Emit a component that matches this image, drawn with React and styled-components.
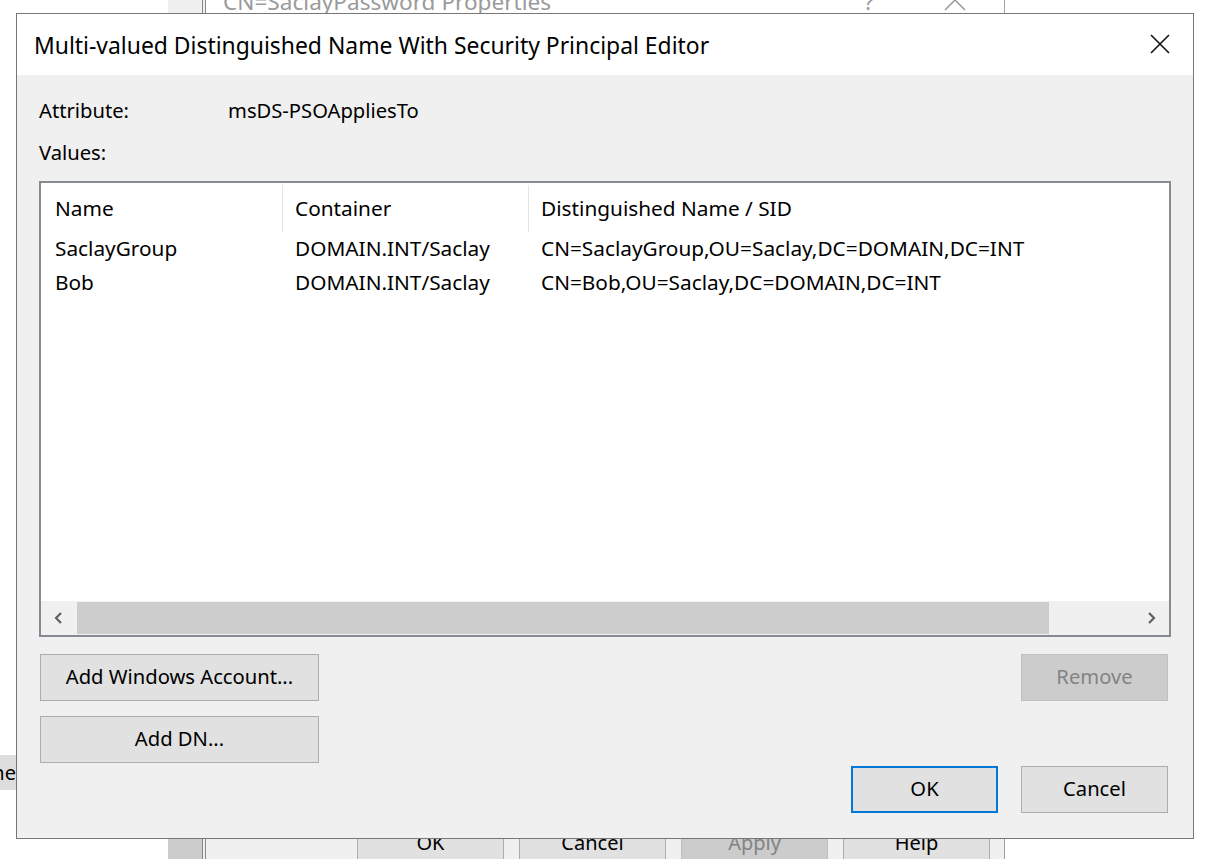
import React from "react";
import styled, { createGlobalStyle } from "styled-components";

const GlobalStyle = createGlobalStyle`
  html, body {
    margin: 0;
    padding: 0;
    background: #ffffff;
    overflow: hidden;
  }
  body {
    font-family: "Noto Sans", "Liberation Sans", sans-serif;
    color: #000;
  }
`;

const rows = [
  {
    name: "SaclayGroup",
    container: "DOMAIN.INT/Saclay",
    dn: "CN=SaclayGroup,OU=Saclay,DC=DOMAIN,DC=INT",
  },
  {
    name: "Bob",
    container: "DOMAIN.INT/Saclay",
    dn: "CN=Bob,OU=Saclay,DC=DOMAIN,DC=INT",
  },
];

export default function App() {
  return (
    <>
      <GlobalStyle />
      <Desktop>
        <SideStrip>
          <StripTop />
          <StripBottom />
        </SideStrip>

        <BackWindow>
          <BackTitleBar>
            <BackTitle>CN=SaclayPassword Properties</BackTitle>
            <BackHelp>?</BackHelp>
            <BackClose>
              <svg width="22" height="22" viewBox="0 0 22 22">
                <path d="M1 1 L21 21 M21 1 L1 21" stroke="#9a9a9a" strokeWidth="1.5" />
              </svg>
            </BackClose>
          </BackTitleBar>
          <BackBody />
          <BackButtons>
            <BackButton>OK</BackButton>
            <BackButton>Cancel</BackButton>
            <BackButton disabled>Apply</BackButton>
            <BackButton>Help</BackButton>
          </BackButtons>
        </BackWindow>

        <PeekTab>ne</PeekTab>

        <Dialog>
          <TitleBar>
            <Title>Multi-valued Distinguished Name With Security Principal Editor</Title>
            <CloseButton aria-label="Close">
              <svg width="20" height="20" viewBox="0 0 20 20">
                <path d="M1 1 L19 19 M19 1 L1 19" stroke="#111" strokeWidth="1.6" />
              </svg>
            </CloseButton>
          </TitleBar>

          <Body>
            <FieldRow>
              <FieldLabel>Attribute:</FieldLabel>
              <span>msDS-PSOAppliesTo</span>
            </FieldRow>
            <ValuesLabel>Values:</ValuesLabel>

            <ListBox>
              <ListGrid>
                <HeaderCell $first $sep>Name</HeaderCell>
                <HeaderCell $sep>Container</HeaderCell>
                <HeaderCell>Distinguished Name / SID</HeaderCell>
                {rows.map((r) => (
                  <React.Fragment key={r.name}>
                    <Cell $first>{r.name}</Cell>
                    <Cell>{r.container}</Cell>
                    <Cell>{r.dn}</Cell>
                  </React.Fragment>
                ))}
              </ListGrid>
              <ScrollBar>
                <ScrollArrow>
                  <svg width="12" height="14" viewBox="0 0 12 14">
                    <path d="M8 2 L3 7 L8 12" fill="none" stroke="#606060" strokeWidth="2.2" />
                  </svg>
                </ScrollArrow>
                <ScrollTrack>
                  <ScrollThumb style={{ width: `${(972 / 1056) * 100}%` }} />
                </ScrollTrack>
                <ScrollArrow>
                  <svg width="12" height="14" viewBox="0 0 12 14">
                    <path d="M4 2 L9 7 L4 12" fill="none" stroke="#606060" strokeWidth="2.2" />
                  </svg>
                </ScrollArrow>
              </ScrollBar>
            </ListBox>

            <Actions>
              <LeftActions>
                <Button>Add Windows Account...</Button>
                <Button>Add DN...</Button>
              </LeftActions>
              <RightActions>
                <Button $small disabled>Remove</Button>
                <DialogButtons>
                  <Button $small $default>OK</Button>
                  <Button $small>Cancel</Button>
                </DialogButtons>
              </RightActions>
            </Actions>
          </Body>
        </Dialog>
      </Desktop>
    </>
  );
}

const Desktop = styled.div`
  position: relative;
  width: 1228px;
  height: 859px;
  overflow: hidden;
  background: #ffffff;
`;

/* windows behind the editor */
const SideStrip = styled.div`
  position: absolute;
  left: 168px;
  top: 0;
  width: 35px;
  height: 859px;
  display: flex;
  flex-direction: column;
`;

const StripTop = styled.div`
  flex: 1;
  background: #f0f0f0;
`;

const StripBottom = styled.div`
  height: 30px;
  background: #cccccc;
`;

const BackWindow = styled.div`
  position: absolute;
  left: 202px;
  top: -32px;
  width: 798px;
  height: 920px;
  border-left: 4px double #888888;
  border-right: 1px solid #a0a0a0;
  background: #f0f0f0;
  display: flex;
  flex-direction: column;
`;

const BackTitleBar = styled.div`
  height: 52px;
  background: #ffffff;
  display: flex;
  align-items: center;
  padding-left: 17px;
  color: #9a9a9a;
  font-size: 22.6px;
`;

const BackTitle = styled.div`
  flex: 1;
  padding-top: 14px;
`;

const BackHelp = styled.div`
  width: 20px;
  margin-right: 60px;
  padding-top: 14px;
`;

const BackClose = styled.div`
  width: 22px;
  margin-right: 38px;
  display: flex;
  align-self: flex-start;
  margin-top: 21px;
`;

const BackBody = styled.div`
  flex: 1;
`;

const BackButtons = styled.div`
  display: flex;
  justify-content: flex-end;
  gap: 15px;
  padding: 0 14px 22px 0;
`;

const BackButton = styled.div`
  width: 145px;
  height: 45px;
  border: 1px solid ${(p) => (p.disabled ? "#bfbfbf" : "#adadad")};
  background: ${(p) => (p.disabled ? "#cccccc" : "#e1e1e1")};
  color: ${(p) => (p.disabled ? "#838383" : "#000")};
  font-size: 20px;
  display: flex;
  align-items: center;
  justify-content: center;
`;

const PeekTab = styled.div`
  position: absolute;
  left: -30px;
  top: 755px;
  width: 46px;
  height: 35px;
  background: #dddddd;
  font-size: 20px;
  display: flex;
  align-items: center;
  justify-content: flex-end;
  overflow: hidden;
`;

/* the editor dialog */
const Dialog = styled.div`
  position: absolute;
  left: 16px;
  top: 13px;
  width: 1176px;
  height: 824px;
  border: 1px solid #777777;
  background: #f0f0f0;
  display: flex;
  flex-direction: column;
`;

const TitleBar = styled.div`
  height: 61px;
  background: #ffffff;
  display: flex;
  align-items: center;
  justify-content: space-between;
  padding: 0 23px 0 17px;
`;

const Title = styled.div`
  font-size: 22.9px;
  padding-top: 2px;
`;

const CloseButton = styled.div`
  display: flex;
  padding-bottom: 2px;
`;

const Body = styled.div`
  flex: 1;
  display: flex;
  flex-direction: column;
  padding: 23px 22px 24px 22px;
  font-size: 20.2px;
`;

const FieldRow = styled.div`
  display: flex;
  height: 24px;
  align-items: center;
`;

const FieldLabel = styled.span`
  width: 189px;
`;

const ValuesLabel = styled.div`
  height: 24px;
  display: flex;
  align-items: center;
  margin-top: 18px;
`;

const ListBox = styled.div`
  margin-top: 17px;
  height: 452px;
  border: 2px solid #868a91;
  background: #ffffff;
  display: flex;
  flex-direction: column;
  justify-content: space-between;
  font-size: 20.8px;
`;

const ListGrid = styled.div`
  display: grid;
  grid-template-columns: 242px 246px 1fr;
  grid-auto-rows: 34px;
  grid-template-rows: 50px;
`;

const HeaderCell = styled.div`
  display: flex;
  align-items: center;
  padding-left: ${(p) => (p.$first ? "14px" : "12px")};
  padding-bottom: 2px;
  margin: 2px 0 1px;
  border-right: ${(p) => (p.$sep ? "1px solid #e5e5e5" : "none")};
  white-space: nowrap;
`;

const Cell = styled.div`
  display: flex;
  align-items: center;
  padding-left: ${(p) => (p.$first ? "14px" : "12px")};
  padding-bottom: 4px;
  white-space: nowrap;
`;

const ScrollBar = styled.div`
  height: 34px;
  background: #f0f0f0;
  display: flex;
  align-items: stretch;
`;

const ScrollArrow = styled.div`
  width: 36px;
  display: flex;
  align-items: center;
  justify-content: center;
`;

const ScrollTrack = styled.div`
  flex: 1;
  display: flex;
  padding: 1px 0;
`;

const ScrollThumb = styled.div`
  background: #cdcdcd;
`;

const Actions = styled.div`
  margin-top: 17px;
  display: flex;
  justify-content: space-between;
  align-items: stretch;
  padding: 0 3px 0 1px;
`;

const LeftActions = styled.div`
  display: flex;
  flex-direction: column;
  gap: 15px;
  align-self: flex-start;
`;

const RightActions = styled.div`
  display: flex;
  flex-direction: column;
  align-items: flex-end;
  justify-content: space-between;
  height: 159px;
`;

const DialogButtons = styled.div`
  display: flex;
  gap: 23px;
`;

const Button = styled.div`
  box-sizing: border-box;
  width: ${(p) => (p.$small ? "147px" : "279px")};
  height: 47px;
  padding-bottom: 4px;
  border: ${(p) =>
    p.$default
      ? "2px solid #0078d7"
      : p.disabled
      ? "1px solid #bfbfbf"
      : "1px solid #adadad"};
  background: ${(p) => (p.disabled ? "#cccccc" : "#e1e1e1")};
  color: ${(p) => (p.disabled ? "#838383" : "#000")};
  font-size: 20.2px;
  display: flex;
  align-items: center;
  justify-content: center;
`;
